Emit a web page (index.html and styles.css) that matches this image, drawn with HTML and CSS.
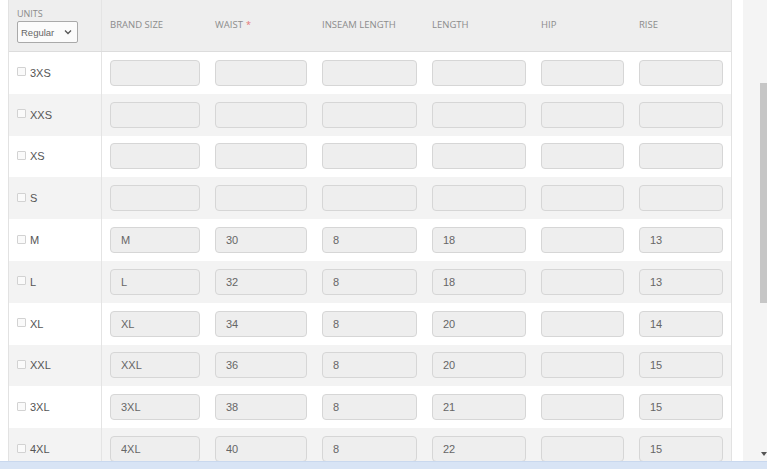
FILE: index.html
```html
<!DOCTYPE html>
<html>
<head>
<meta charset="utf-8">
<link rel="stylesheet" href="styles.css">
</head>
<body>
<div class="screen">
  <div class="main">
    <div class="content">
      <div class="table">
        <div class="row head">
          <div class="cell first units">
            <div class="units-label">UNITS</div>
            <div class="select"><span>Regular</span>
              <svg width="8" height="6" viewBox="0 0 8 6"><path d="M1 1.5 L4 4.5 L7 1.5" fill="none" stroke="#555" stroke-width="1.3"/></svg>
            </div>
          </div>
          <div class="cell hcell">BRAND SIZE</div>
          <div class="cell hcell">WAIST <span class="req">*</span></div>
          <div class="cell hcell">INSEAM LENGTH</div>
          <div class="cell hcell">LENGTH</div>
          <div class="cell hcell">HIP</div>
          <div class="cell hcell">RISE</div>
        </div>

        <div class="row">
          <div class="cell first"><span class="cb"></span><span class="lbl">3XS</span></div>
          <div class="cell"><input class="inp" readonly value=""></div>
          <div class="cell"><input class="inp" readonly value=""></div>
          <div class="cell"><input class="inp" readonly value=""></div>
          <div class="cell"><input class="inp" readonly value=""></div>
          <div class="cell"><input class="inp" readonly value=""></div>
          <div class="cell last"><input class="inp" readonly value=""></div>
        </div>
        <div class="row alt">
          <div class="cell first"><span class="cb"></span><span class="lbl">XXS</span></div>
          <div class="cell"><input class="inp" readonly value=""></div>
          <div class="cell"><input class="inp" readonly value=""></div>
          <div class="cell"><input class="inp" readonly value=""></div>
          <div class="cell"><input class="inp" readonly value=""></div>
          <div class="cell"><input class="inp" readonly value=""></div>
          <div class="cell last"><input class="inp" readonly value=""></div>
        </div>
        <div class="row">
          <div class="cell first"><span class="cb"></span><span class="lbl">XS</span></div>
          <div class="cell"><input class="inp" readonly value=""></div>
          <div class="cell"><input class="inp" readonly value=""></div>
          <div class="cell"><input class="inp" readonly value=""></div>
          <div class="cell"><input class="inp" readonly value=""></div>
          <div class="cell"><input class="inp" readonly value=""></div>
          <div class="cell last"><input class="inp" readonly value=""></div>
        </div>
        <div class="row alt">
          <div class="cell first"><span class="cb"></span><span class="lbl">S</span></div>
          <div class="cell"><input class="inp" readonly value=""></div>
          <div class="cell"><input class="inp" readonly value=""></div>
          <div class="cell"><input class="inp" readonly value=""></div>
          <div class="cell"><input class="inp" readonly value=""></div>
          <div class="cell"><input class="inp" readonly value=""></div>
          <div class="cell last"><input class="inp" readonly value=""></div>
        </div>
        <div class="row">
          <div class="cell first"><span class="cb"></span><span class="lbl">M</span></div>
          <div class="cell"><input class="inp" readonly value="M"></div>
          <div class="cell"><input class="inp" readonly value="30"></div>
          <div class="cell"><input class="inp" readonly value="8"></div>
          <div class="cell"><input class="inp" readonly value="18"></div>
          <div class="cell"><input class="inp" readonly value=""></div>
          <div class="cell last"><input class="inp" readonly value="13"></div>
        </div>
        <div class="row alt">
          <div class="cell first"><span class="cb"></span><span class="lbl">L</span></div>
          <div class="cell"><input class="inp" readonly value="L"></div>
          <div class="cell"><input class="inp" readonly value="32"></div>
          <div class="cell"><input class="inp" readonly value="8"></div>
          <div class="cell"><input class="inp" readonly value="18"></div>
          <div class="cell"><input class="inp" readonly value=""></div>
          <div class="cell last"><input class="inp" readonly value="13"></div>
        </div>
        <div class="row">
          <div class="cell first"><span class="cb"></span><span class="lbl">XL</span></div>
          <div class="cell"><input class="inp" readonly value="XL"></div>
          <div class="cell"><input class="inp" readonly value="34"></div>
          <div class="cell"><input class="inp" readonly value="8"></div>
          <div class="cell"><input class="inp" readonly value="20"></div>
          <div class="cell"><input class="inp" readonly value=""></div>
          <div class="cell last"><input class="inp" readonly value="14"></div>
        </div>
        <div class="row alt">
          <div class="cell first"><span class="cb"></span><span class="lbl">XXL</span></div>
          <div class="cell"><input class="inp" readonly value="XXL"></div>
          <div class="cell"><input class="inp" readonly value="36"></div>
          <div class="cell"><input class="inp" readonly value="8"></div>
          <div class="cell"><input class="inp" readonly value="20"></div>
          <div class="cell"><input class="inp" readonly value=""></div>
          <div class="cell last"><input class="inp" readonly value="15"></div>
        </div>
        <div class="row">
          <div class="cell first"><span class="cb"></span><span class="lbl">3XL</span></div>
          <div class="cell"><input class="inp" readonly value="3XL"></div>
          <div class="cell"><input class="inp" readonly value="38"></div>
          <div class="cell"><input class="inp" readonly value="8"></div>
          <div class="cell"><input class="inp" readonly value="21"></div>
          <div class="cell"><input class="inp" readonly value=""></div>
          <div class="cell last"><input class="inp" readonly value="15"></div>
        </div>
        <div class="row alt">
          <div class="cell first"><span class="cb"></span><span class="lbl">4XL</span></div>
          <div class="cell"><input class="inp" readonly value="4XL"></div>
          <div class="cell"><input class="inp" readonly value="40"></div>
          <div class="cell"><input class="inp" readonly value="8"></div>
          <div class="cell"><input class="inp" readonly value="22"></div>
          <div class="cell"><input class="inp" readonly value=""></div>
          <div class="cell last"><input class="inp" readonly value="15"></div>
        </div>
      </div>
    </div>
    <div class="gap"></div>
    <div class="track">
      <div class="track-top"></div>
      <div class="thumb-wrap"><div class="thumb"></div></div>
      <div class="track-rest"></div>
      <div class="arrow"><svg width="6" height="4" viewBox="0 0 6 4"><path d="M0 0 H6 L3 4 Z" fill="#555"/></svg></div>
    </div>
  </div>
  <div class="bar"></div>
</div>
</body>
</html>
```

FILE: styles.css
```css
* { box-sizing: border-box; }
html, body { margin: 0; padding: 0; background: #fff; }
body { font-family: "Liberation Sans", Arial, sans-serif; }

.screen { width: 767px; height: 469px; display: flex; flex-direction: column; overflow: hidden; }
.main { height: 461px; display: flex; overflow: hidden; }
.content { width: 732px; padding-left: 8px; flex: none; }
.gap { width: 11px; flex: none; background: #fff; }
.track { width: 24px; flex: none; display: flex; flex-direction: column; background: #f4f4f4; }
.track-top { height: 83px; flex: none; }
.thumb-wrap { height: 220px; flex: none; display: flex; justify-content: flex-end; }
.thumb { width: 7px; height: 100%; background: #c6c6c6; }
.track-rest { flex: 1; }
.arrow { height: 14px; display: flex; justify-content: flex-end; align-items: center; }
.bar { height: 8px; flex: none; background: #d8e4f5; border-top: 1px solid #c9d8ee; }

.table { width: 724px; border-left: 1px solid #e2e2e2; border-right: 1px solid #e2e2e2; }
.row { display: grid; grid-template-columns: 93px 105px 107px 110px 109px 98px 100px; height: 41.8px; background: #fff; }
.row.alt { background: #f3f3f3; }
.row.head { height: 52px; background: #eeeeee; border-bottom: 1px solid #dcdcdc; }

.cell { padding: 0 7px 0 8px; display: flex; align-items: center; }
.cell.last { padding-right: 8px; }
.cell.first { border-right: 1px solid #e4e4e4; padding-left: 8px; }

.hcell { font-family: "Open Sans", sans-serif; font-size: 9.5px; color: #8c8c8c; padding-bottom: 2px; }
.req { color: #e57373; margin-left: 3px; font-size: 9px; }

.units { flex-direction: column; align-items: flex-start; justify-content: flex-start; padding-top: 8px; }
.units-label { font-family: "Open Sans", sans-serif; font-size: 9px; color: #8a8a8a; line-height: 12px; height: 13px; }
.select { width: 61px; height: 22px; border: 1px solid #a9a9a9; border-radius: 2px; background: #fbfbfb; display: flex; align-items: center; justify-content: space-between; padding: 0 5px 0 3px; font-size: 9.5px; color: #666; }
.select svg { display: block; }

.cb { width: 9px; height: 9px; border: 1px solid #d2d2d2; border-radius: 1px; background: #fafafa; flex: none; margin-top: -2px; }
.lbl { margin-left: 4px; font-size: 11px; color: #555; }

.inp { width: 100%; height: 26px; border: 1px solid #d6d6d6; border-radius: 4px; background: #eeeeee; padding: 0 0 0 10px; font-family: "Liberation Sans", Arial, sans-serif; font-size: 11px; color: #666; outline: none; margin: 0; display: block; }
```
